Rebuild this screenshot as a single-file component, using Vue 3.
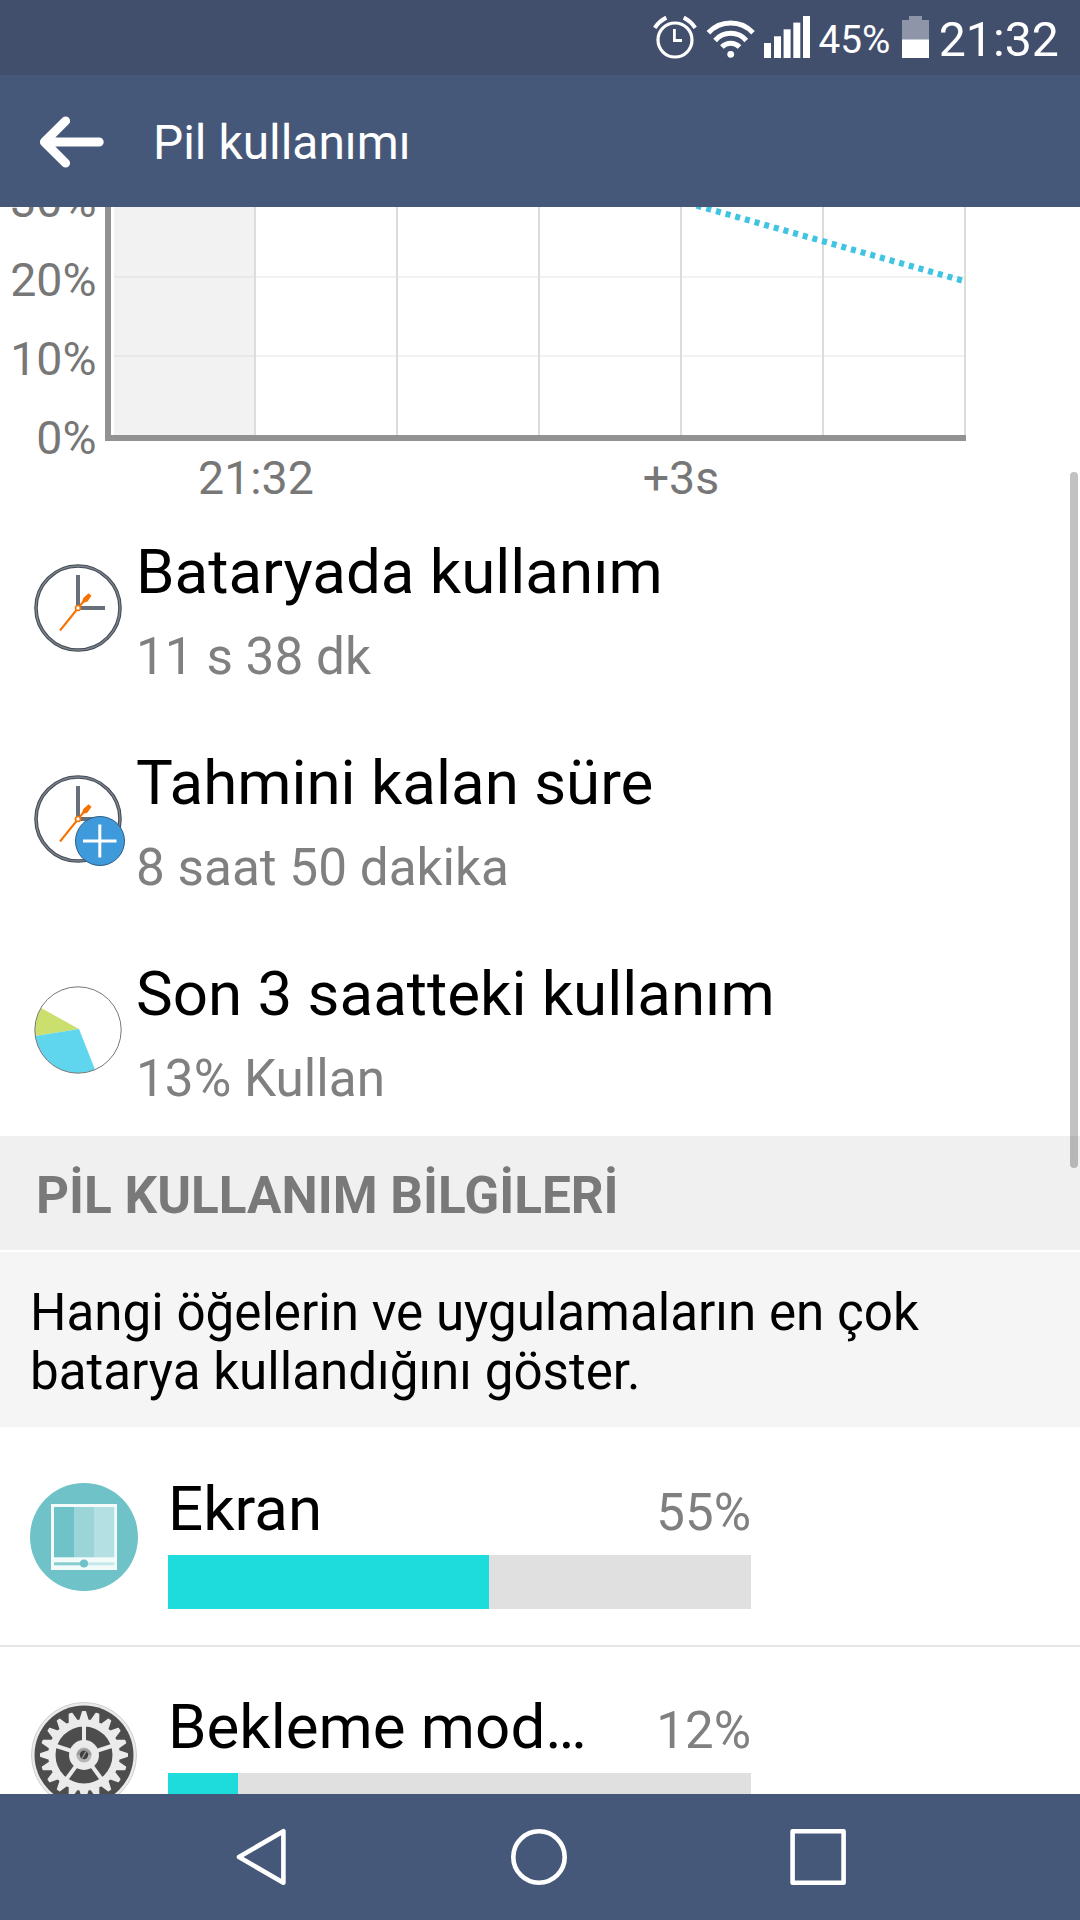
<script setup>
const polar = (r, deg) => {
  const a = (deg * Math.PI) / 180
  return `${(54 + r * Math.sin(a)).toFixed(2)} ${(54 - r * Math.cos(a)).toFixed(2)}`
}

// Twenty narrow teeth, one every 18 degrees
const gearPath =
  'M' +
  Array.from({ length: 20 }, (_, i) => {
    const c = i * 18
    return [polar(35, c - 6.4), polar(43.2, c - 1.7), polar(43.2, c + 1.7), polar(35, c + 6.4)].join(' L')
  }).join(' L') +
  ' Z'

const spokes = [0, 72, 144, 216, 288]

const bars = [
  { x: 0, y: 27 },
  { x: 10, y: 20.3 },
  { x: 19.6, y: 13.3 },
  { x: 29.3, y: 6.6 },
  { x: 39, y: 0 },
]

const yLabels = [
  { text: '30%', y: 10 },
  { text: '20%', y: 89 },
  { text: '10%', y: 168 },
  { text: '0%', y: 247 },
]

const columns = [254, 396, 538, 680, 822, 964]

const summary = [
  { icon: 'clock', title: 'Bataryada kullanım', value: '11 s 38 dk' },
  { icon: 'remaining', title: 'Tahmini kalan süre', value: '8 saat 50 dakika' },
  { icon: 'pie', title: 'Son 3 saatteki kullanım', value: '13% Kullan' },
]

const apps = [
  { icon: 'screen', name: 'Ekran', percent: 55 },
  { icon: 'gear', name: 'Bekleme mod…', percent: 12 },
]
</script>

<template>
  <div class="phone">
    <header class="status">
      <svg class="alarm" width="44" height="44" viewBox="653 15 44 44" fill="none" stroke="#fff">
        <circle cx="675" cy="40" r="17" stroke-width="3.2" />
        <path d="M674.4 29V40.5H682" stroke-width="2.8" />
        <path d="M654.8 27.8Q659 21.3 666.3 17.6M695.2 27.8Q691 21.3 683.7 17.6" stroke-width="4" />
      </svg>
      <svg class="wifi" width="50" height="40" viewBox="706 19 50 40" fill="none" stroke="#fff" stroke-width="5">
        <path d="M708.4 32.7A30.5 30.5 0 0 1 753 32.7" />
        <path d="M715.1 40.5A20.6 20.6 0 0 1 746.3 40.5" />
        <path d="M721.9 47A12 12 0 0 1 739.5 47" />
        <circle cx="730.7" cy="54.3" r="3.4" fill="#fff" stroke="none" />
      </svg>
      <svg class="signal" width="46" height="42" viewBox="0 0 46 42" fill="#fff">
        <rect v-for="b in bars" :key="b.x" :x="b.x" :y="b.y" width="7" :height="42 - b.y" />
      </svg>
      <span class="level">45%</span>
      <svg class="battery" width="27" height="42" viewBox="0 0 27 42">
        <path d="M7 0H20V4H27V24H0V4H7Z" fill="#8e95a8" />
        <rect y="23.5" width="27" height="18.5" fill="#fff" />
      </svg>
      <span class="time">21:32</span>
    </header>

    <div class="appbar">
      <svg width="68" height="56" viewBox="38 114.3 68 56" fill="none" stroke="#fff" stroke-width="9" stroke-linecap="round" stroke-linejoin="round">
        <path d="M65.6 121.2L44.4 142.3L65.6 163.4M46 142.3H99.2" />
      </svg>
      <h1>Pil kullanımı</h1>
    </div>

    <main class="content">
      <svg class="chart" width="1080" height="296" viewBox="0 0 1080 296">
        <g>
          <rect x="114" y="69" width="852" height="2" fill="#f1f1f1" />
          <rect x="114" y="148" width="852" height="2" fill="#f1f1f1" />
          <rect x="114" y="0" width="140" height="228" fill="#f2f2f2" />
          <rect x="114" y="69" width="140" height="2" fill="#e8e8e8" />
          <rect x="114" y="148" width="140" height="2" fill="#e8e8e8" />
        </g>
        <rect v-for="x in columns" :key="x" :x="x" y="0" width="2" height="228" fill="#dcdcdc" />
        <path d="M687.05 -4.1L966 74.6" fill="none" stroke="#3fc4e2" stroke-width="6.2" stroke-dasharray="5 5.02" />
        <path d="M105 0H111V228H966V234H105Z" fill="#929292" />
        <g class="axis-text">
          <text v-for="l in yLabels" :key="l.text" x="96.5" :y="l.y" text-anchor="end">{{ l.text }}</text>
          <text x="256" y="287" text-anchor="middle">21:32</text>
          <text x="681" y="287" text-anchor="middle">+3s</text>
        </g>
      </svg>

      <section v-for="s in summary" :key="s.title" class="summary">
        <svg width="96" height="96" viewBox="-48 -48 96 96">
          <template v-if="s.icon !== 'pie'">
            <circle r="42" fill="#fff" stroke="#454b54" stroke-width="3.6" />
            <circle r="42" fill="none" stroke="#7b838e" stroke-width="1.5" />
            <path d="M0 -33V0M0 0H27" stroke="#67707a" stroke-width="4" />
            <path d="M-18 22.5L5 -6" stroke="#f57200" stroke-width="2" />
            <path d="M3.5 -4.5L5.3 -10L10.6 -14.8L13.5 -12.2L9.5 -6.4Z" fill="#f57200" />
            <circle r="2.5" fill="#fff" stroke="#f57200" stroke-width="1.7" />
          </template>
          <template v-if="s.icon === 'remaining'">
            <circle cx="22" cy="22" r="24.5" fill="#3f9adb" stroke="#2b5f88" stroke-width="1" />
            <path d="M5 22H38.5M21.8 5.5V38.5" stroke="#fff" stroke-width="3" />
          </template>
          <template v-if="s.icon === 'pie'">
            <circle r="43.4" fill="#fff" />
            <path d="M1 -1L-37 -22A43 43 0 0 0 -42.6 6Z" fill="#cbdf6e" />
            <path d="M1 -1L-42.6 6A43 43 0 0 0 17 39.5Z" fill="#60d6ee" />
            <circle r="43.2" fill="none" stroke="#777" stroke-width="1" />
          </template>
        </svg>
        <div class="summary-text">
          <h2>{{ s.title }}</h2>
          <p>{{ s.value }}</p>
        </div>
      </section>

      <h3 class="section-title">PİL KULLANIM BİLGİLERİ</h3>
      <p class="description">Hangi öğelerin ve uygulamaların en çok<br />batarya kullandığını göster.</p>

      <section v-for="a in apps" :key="a.name" class="app">
        <svg width="108" height="108" viewBox="0 0 108 108">
          <template v-if="a.icon === 'screen'">
            <circle cx="54" cy="54" r="54" fill="#6ec2c8" />
            <rect x="21" y="21" width="66" height="66" fill="#f3fafa" />
            <rect x="24" y="24" width="20" height="50.3" fill="#6ec2c8" />
            <rect x="44" y="24" width="20.7" height="50.3" fill="#9bd5d8" />
            <rect x="64.7" y="24" width="19.6" height="50.3" fill="#b5e0e3" />
            <rect x="24" y="79.3" width="30" height="3" fill="#86cdd1" />
            <rect x="54" y="79.3" width="30.3" height="3" fill="#c5e8ea" />
            <circle cx="54" cy="80.5" r="4" fill="#6ec2c8" />
          </template>
          <template v-else>
            <circle cx="54" cy="54" r="52.5" fill="#ebebeb" stroke="#cfcfcf" stroke-width="1" />
            <circle cx="54" cy="54" r="49.5" fill="#4d4d4d" />
            <path :d="gearPath" fill="#ebebeb" stroke="#ebebeb" stroke-width="1.6" stroke-linejoin="round" />
            <circle cx="54" cy="54" r="28.5" fill="#4d4d4d" />
            <rect v-for="d in spokes" :key="d" x="52" y="24" width="4" height="20" fill="#ebebeb" :transform="`rotate(${d} 54 54)`" />
            <circle cx="54" cy="54" r="15" fill="#ebebeb" />
            <circle cx="54" cy="54" r="7.6" fill="#b5b5b5" />
            <path d="M46.6 54A7.5 7.5 0 0 1 61.4 54Z" fill="#999" />
            <circle cx="54" cy="54" r="4.2" fill="#3f3f3f" />
            <path d="M52 57.5L56 50.5" stroke="#999" stroke-width="1.4" />
          </template>
        </svg>
        <div class="app-body">
          <div class="app-head">
            <span class="name">{{ a.name }}</span>
            <span class="percent">{{ a.percent }}%</span>
          </div>
          <div class="track"><div class="fill" :style="{ width: a.percent + '%' }"></div></div>
        </div>
      </section>
    </main>

    <nav class="nav">
      <svg width="610" height="60" viewBox="236 1827 610 60" fill="none" stroke="#fff" stroke-width="4.6" stroke-linejoin="round">
        <path d="M239 1857L283.4 1831.2V1882.8Z" />
        <circle cx="539" cy="1857" r="25.7" />
        <rect x="792.6" y="1831.3" width="51" height="51.4" />
      </svg>
    </nav>
    <div class="scrollbar"></div>
  </div>
</template>

<style>
body {
  margin: 0;
}
</style>

<style scoped>
.phone {
  position: relative;
  display: flex;
  flex-direction: column;
  width: 1080px;
  height: 1920px;
  overflow: hidden;
  background: #fff;
  font-family: Roboto, "Noto Sans", sans-serif;
}
h1, h2, h3, p {
  margin: 0;
  font-weight: 400;
  white-space: nowrap;
}
.status {
  display: flex;
  flex: none;
  align-items: flex-start;
  box-sizing: border-box;
  height: 75px;
  padding: 15px 0 0 653px;
  background: #414f6d;
  color: #fff;
}
.wifi {
  margin: 4px 0 0 9px;
}
.signal {
  margin: 1px 0 0 8px;
}
.level {
  width: 73px;
  margin: 4px 0 0 8.5px;
  font-size: 38.7px;
  line-height: 42px;
}
.battery {
  margin: 1px 0 0 10.5px;
}
.time {
  margin: 1px 0 0 9.7px;
  font-size: 48.3px;
  line-height: 48px;
}
.appbar {
  display: flex;
  flex: none;
  align-items: center;
  box-sizing: border-box;
  height: 132px;
  padding: 2px 0 0 38px;
  background: #465879;
  color: #fff;
}
.appbar h1 {
  margin: 2px 0 0 47px;
  font-size: 47.9px;
  line-height: 60px;
}
.content {
  flex: none;
  height: 1587px;
  overflow: hidden;
}
.chart {
  display: block;
  overflow: visible;
}
.axis-text {
  fill: #777;
  font-size: 46.5px;
}
.summary {
  display: flex;
  align-items: center;
  height: 211px;
  padding-left: 30px;
}
.summary svg {
  margin-bottom: 2px;
}
.summary-text {
  align-self: flex-start;
  padding: 34px 0 0 10px;
}
.summary h2 {
  color: #000;
  font-size: 61.85px;
  line-height: 70px;
}
.summary p {
  margin-top: 20px;
  color: #808080;
  font-size: 51.3px;
  line-height: 60px;
}
.section-title {
  box-sizing: border-box;
  height: 114px;
  padding: 30px 0 0 36px;
  background: #f0f0f0;
  color: #797979;
  font-size: 51.3px;
  font-weight: 700;
  line-height: 59px;
}
.description {
  box-sizing: border-box;
  height: 175px;
  margin-top: 2px;
  padding: 31px 0 0 30px;
  background: #f5f5f5;
  color: #000;
  font-size: 51.15px;
  line-height: 59px;
}
.app {
  display: flex;
  align-items: center;
  box-sizing: border-box;
  height: 218px;
  padding-left: 30px;
  border-top: 2px solid #e5e5e5;
}
.description + .app {
  border-color: #fff;
}
.app-body {
  align-self: flex-start;
  width: 583px;
  margin-left: 30px;
  padding-top: 45px;
}
.app-head {
  display: flex;
  align-items: baseline;
  justify-content: space-between;
  height: 81px;
}
.name {
  color: #000;
  font-size: 61.85px;
  line-height: 70px;
}
.percent {
  color: #808080;
  font-size: 51px;
  line-height: 60px;
}
.track {
  height: 54px;
  background: #e0e0e0;
}
.fill {
  height: 100%;
  background: #1fdcdc;
}
.nav {
  flex: none;
  box-sizing: border-box;
  height: 126px;
  padding: 33px 0 0 236px;
  background: #465879;
}
.nav svg {
  display: block;
}
.scrollbar {
  position: absolute;
  top: 472px;
  right: 2px;
  width: 8px;
  height: 696px;
  border-radius: 4px;
  background: rgba(0, 0, 0, 0.24);
}
</style>
